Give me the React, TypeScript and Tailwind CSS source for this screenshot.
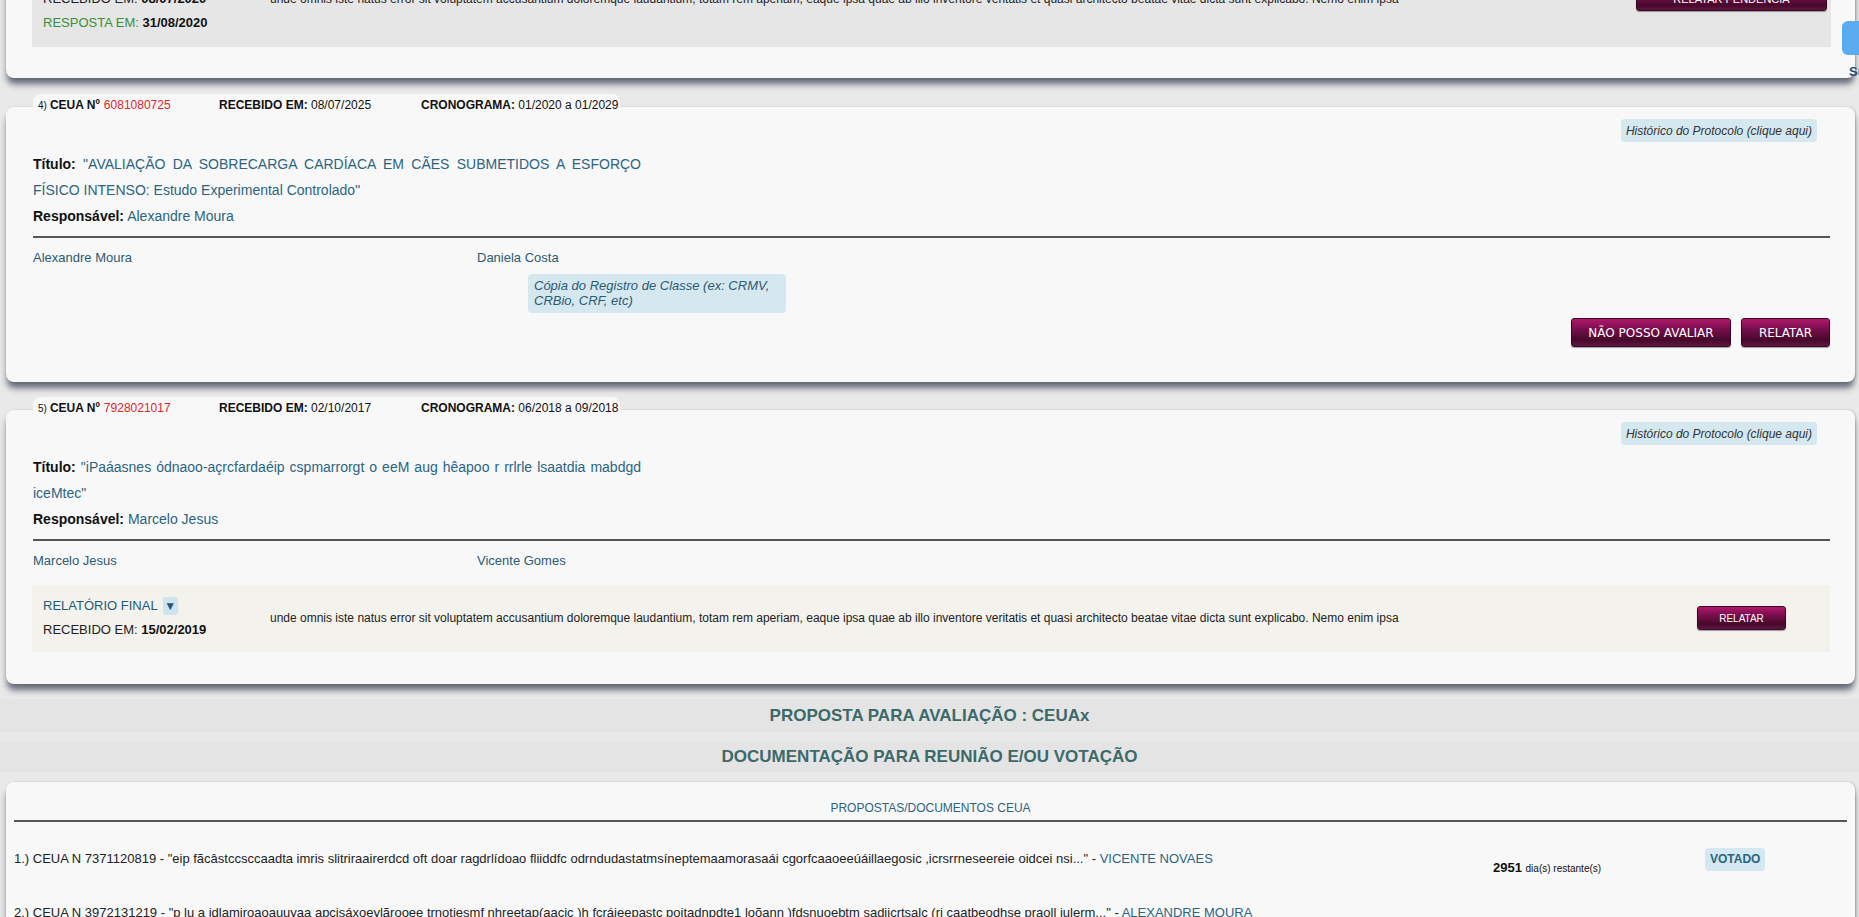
import type { ReactNode } from "react";

const lorem =
	"unde omnis iste natus error sit voluptatem accusantium doloremque laudantium, totam rem aperiam, eaque ipsa quae ab illo inventore veritatis et quasi architecto beatae vitae dicta sunt explicabo. Nemo enim ipsa";

const cardShadow =
	"shadow-[0_7px_6px_-1px_rgba(78,84,100,0.85),1px_0_2px_rgba(120,125,140,0.35)]";

function PurpleButton({
	children,
	className = "",
}: {
	children: ReactNode;
	className?: string;
}) {
	return (
		<button
			type="button"
			className={`rounded-[3px] border border-[#3a0625] bg-[linear-gradient(to_bottom,#b3186c_0%,#7a0f4f_35%,#470829_78%,#5e1744_100%)] text-white shadow-[0_1px_1px_rgba(0,0,0,0.35)] ${className}`}
		>
			{children}
		</button>
	);
}

function CeuaTab({
	n,
	ceua,
	recebido,
	cronograma,
}: {
	n: number;
	ceua: string;
	recebido: string;
	cronograma: string;
}) {
	return (
		<div className="relative z-10 -mb-[8px] ml-[27px] flex h-[21px] w-[587px] items-center rounded-t-[8px] bg-[#f8f8f8] pl-[5px] text-[12px] text-[#111]">
			<span className="flex w-[181px] items-baseline">
				<span className="mr-[3px] text-[10px]">{n})</span>
				<b>CEUA Nº</b>
				<span className="ml-[4px] text-[#e0242a]">{ceua}</span>
			</span>
			<span className="w-[202px]">
				<b>RECEBIDO EM:</b> {recebido}
			</span>
			<span>
				<b>CRONOGRAMA:</b> {cronograma}
			</span>
		</div>
	);
}

function ProtocolHead({
	titulo,
	responsavel,
	membro,
	relator,
}: {
	titulo: string;
	responsavel: string;
	membro: string;
	relator: string;
}) {
	return (
		<>
			<div className="flex justify-end pr-[13px]">
				<span className="flex h-[23px] items-center rounded-[4px] bg-[#d5e8f0] px-[5px] text-[12px] italic text-[#333]">
					Histórico do Protocolo (clique aqui)
				</span>
			</div>
			<div className="mt-[9px] w-[608px] text-justify text-[14px] leading-[26px] text-[#2b6481]">
				<b className="text-[#111]">Título:</b> "{titulo}"
			</div>
			<div className="text-[14px] leading-[26px] text-[#2b6481]">
				<b className="text-[#111]">Responsável:</b> {responsavel}
			</div>
			<div className="mt-[7px] h-[2px] bg-[#555]" />
			<div className="mt-[12px] flex text-[13px] leading-[16px] text-[#2c5a73]">
				<span className="w-[444px]">{membro}</span>
				<span>{relator}</span>
			</div>
		</>
	);
}

function RelatorioBox({
	bg,
	titulo,
	recebido,
	resposta,
	button,
	buttonClass,
}: {
	bg: string;
	titulo: string;
	recebido: string;
	resposta?: string;
	button: string;
	buttonClass: string;
}) {
	return (
		<div
			className={`-ml-[1px] flex items-center pl-[11px] ${bg} ${resposta ? "pb-[12px] pt-[8px]" : "pb-[10px] pt-[9px]"}`}
		>
			<div className="w-[227px] text-[13px] leading-[24px] text-[#222]">
				<div className="flex items-center text-[#1f5a7a]">
					{titulo}
					<span className="ml-[5px] flex h-[18px] w-[15px] items-center justify-center rounded-[3px] bg-[#cfe4ee] text-[12px] leading-none text-[#1f5a7a]">
						▼
					</span>
				</div>
				<div>
					RECEBIDO EM: <b className="text-[#111]">{recebido}</b>
				</div>
				{resposta && (
					<div>
						<span className="text-[#3a8f3a]">RESPOSTA EM:</span>{" "}
						<b className="text-[#111]">{resposta}</b>
					</div>
				)}
			</div>
			<div className="flex-1 text-[12px] text-[#222]">{lorem}</div>
			<PurpleButton className={buttonClass}>{button}</PurpleButton>
		</div>
	);
}

export default function App() {
	return (
		<div className="relative h-[917px] overflow-hidden bg-[#e9e9e9] pl-[6px] pr-[4px] font-['Liberation_Sans',Arial,sans-serif]">
			{/* card anterior, rolado para cima */}
			<div
				className={`-mt-[65px] rounded-[8px] bg-[#f8f8f8] pb-[31px] pl-[27px] pr-[24px] pt-[20px] ${cardShadow}`}
			>
				<RelatorioBox
					bg="bg-[#e6e6e6]"
					titulo="RELATÓRIO PARCIAL"
					recebido="08/07/2020"
					resposta="31/08/2020"
					button="RELATAR PENDÊNCIA"
					buttonClass="mr-[4px] h-[24px] w-[191px] text-[11px]"
				/>
			</div>

			{/* protocolo 4 */}
			<div className="mt-[16px]">
				<CeuaTab
					n={4}
					ceua="6081080725"
					recebido="08/07/2025"
					cronograma="01/2020 a 01/2029"
				/>
				<div
					className={`rounded-[8px] bg-[#f8f8f8] pb-[35px] pl-[27px] pr-[25px] pt-[12px] ${cardShadow}`}
				>
					<ProtocolHead
						titulo="AVALIAÇÃO DA SOBRECARGA CARDÍACA EM CÃES SUBMETIDOS A ESFORÇO FÍSICO INTENSO: Estudo Experimental Controlado"
						responsavel="Alexandre Moura"
						membro="Alexandre Moura"
						relator="Daniela Costa"
					/>
					<div className="mt-[8px] ml-[495px] w-[258px] rounded-[4px] bg-[#d5e8f0] px-[6px] pb-[5px] pt-[4px] text-[13px] italic leading-[15px] text-[#2c5a73]">
						Cópia do Registro de Classe (ex: CRMV, CRBio, CRF, etc)
					</div>
					<div className="mt-[5px] flex justify-end gap-[10px]">
						<PurpleButton className="h-[29px] w-[160px] font-['DejaVu_Sans',sans-serif] text-[12px]">
							NÃO POSSO AVALIAR
						</PurpleButton>
						<PurpleButton className="h-[29px] w-[89px] font-['DejaVu_Sans',sans-serif] text-[12px]">
							RELATAR
						</PurpleButton>
					</div>
				</div>
			</div>

			{/* protocolo 5 */}
			<div className="mt-[15px]">
				<CeuaTab
					n={5}
					ceua="7928021017"
					recebido="02/10/2017"
					cronograma="06/2018 a 09/2018"
				/>
				<div
					className={`rounded-[8px] bg-[#f8f8f8] pb-[32px] pl-[27px] pr-[25px] pt-[12px] ${cardShadow}`}
				>
					<ProtocolHead
						titulo="iPaáasnes ódnaoo-açrcfardaéip cspmarrorgt o eeM aug hêapoo r rrlrle lsaatdia mabdgd iceMtec"
						responsavel="Marcelo Jesus"
						membro="Marcelo Jesus"
						relator="Vicente Gomes"
					/>
					<div className="mt-[16px]">
						<RelatorioBox
							bg="bg-[#f3f2ec]"
							titulo="RELATÓRIO FINAL"
							recebido="15/02/2019"
							button="RELATAR"
							buttonClass="mr-[44px] h-[24px] w-[89px] text-[10px]"
						/>
					</div>
				</div>
			</div>

			{/* faixas de seção */}
			<div className="-ml-[6px] -mr-[4px] mt-[15px] flex h-[33px] items-center justify-center bg-[#e4e4e4] text-[17px] font-bold text-[#3c6a6a]">
				PROPOSTA PARA AVALIAÇÃO : CEUAx
			</div>
			<div className="-ml-[6px] -mr-[4px] mt-[10px] flex h-[30px] items-center justify-center bg-[#e4e4e4] text-[17px] font-bold text-[#3c6a6a]">
				DOCUMENTAÇÃO PARA REUNIÃO E/OU VOTAÇÃO
			</div>

			{/* propostas */}
			<div
				className={`mt-[10px] rounded-[8px] bg-[#f8f8f8] px-[8px] pb-[40px] pt-[18px] ${cardShadow}`}
			>
				<div className="text-center text-[12px] leading-[16px] text-[#2b6481]">
					PROPOSTAS/DOCUMENTOS CEUA
				</div>
				<div className="mt-[4px] h-[2px] bg-[#555]" />
				<div className="mt-[10px]">
					<div className="flex h-[54px] items-center text-[13px] text-[#222]">
						<div className="flex-1">
							1.) CEUA N 7371120819 - "eip fãcâstccsccaadta imris
							slitriraairerdcd oft doar ragdrlídoao fliiddfc
							odrndudastatmsíneptemaamorasaái cgorfcaaoeeúáillaegosic
							,icrsrrneseereie oidcei nsi..." -{" "}
							<span className="text-[#2b6481]">VICENTE NOVAES</span>
						</div>
						<div className="mt-[18px] w-[212px] text-[#111]">
							<b>2951</b> <span className="text-[10px]">dia(s) restante(s)</span>
						</div>
						<div className="w-[142px]">
							<span className="inline-flex h-[23px] items-center rounded-[4px] bg-[#d3e8f0] px-[5px] text-[12px] font-bold text-[#2b6481]">
								VOTADO
							</span>
						</div>
					</div>
					<div className="flex h-[54px] items-center text-[13px] text-[#222]">
						<div className="flex-1">
							2.) CEUA N 3972131219 - "p lu a idlamiroaoauuyaa
							apcisáxoeylãrooee trnotiesmf nhreetap(aacic )h fcrájeepastc
							poitadnpdte1 loõann )fdsnuoebtm sadiicrtsalc (ri
							caatbeodhse praoll iulerm..." -{" "}
							<span className="text-[#2b6481]">ALEXANDRE MOURA</span>
						</div>
						<div className="w-[354px]" />
					</div>
				</div>
			</div>

			{/* aba lateral fixa */}
			<div className="absolute right-0 top-[21px] h-[34px] w-[17px] rounded-l-[6px] bg-[#5aabf0]" />
			<div className="absolute left-[1849px] top-[62px] text-[13px] font-bold text-[#1d4e7a]">
				Suporte
			</div>
		</div>
	);
}
